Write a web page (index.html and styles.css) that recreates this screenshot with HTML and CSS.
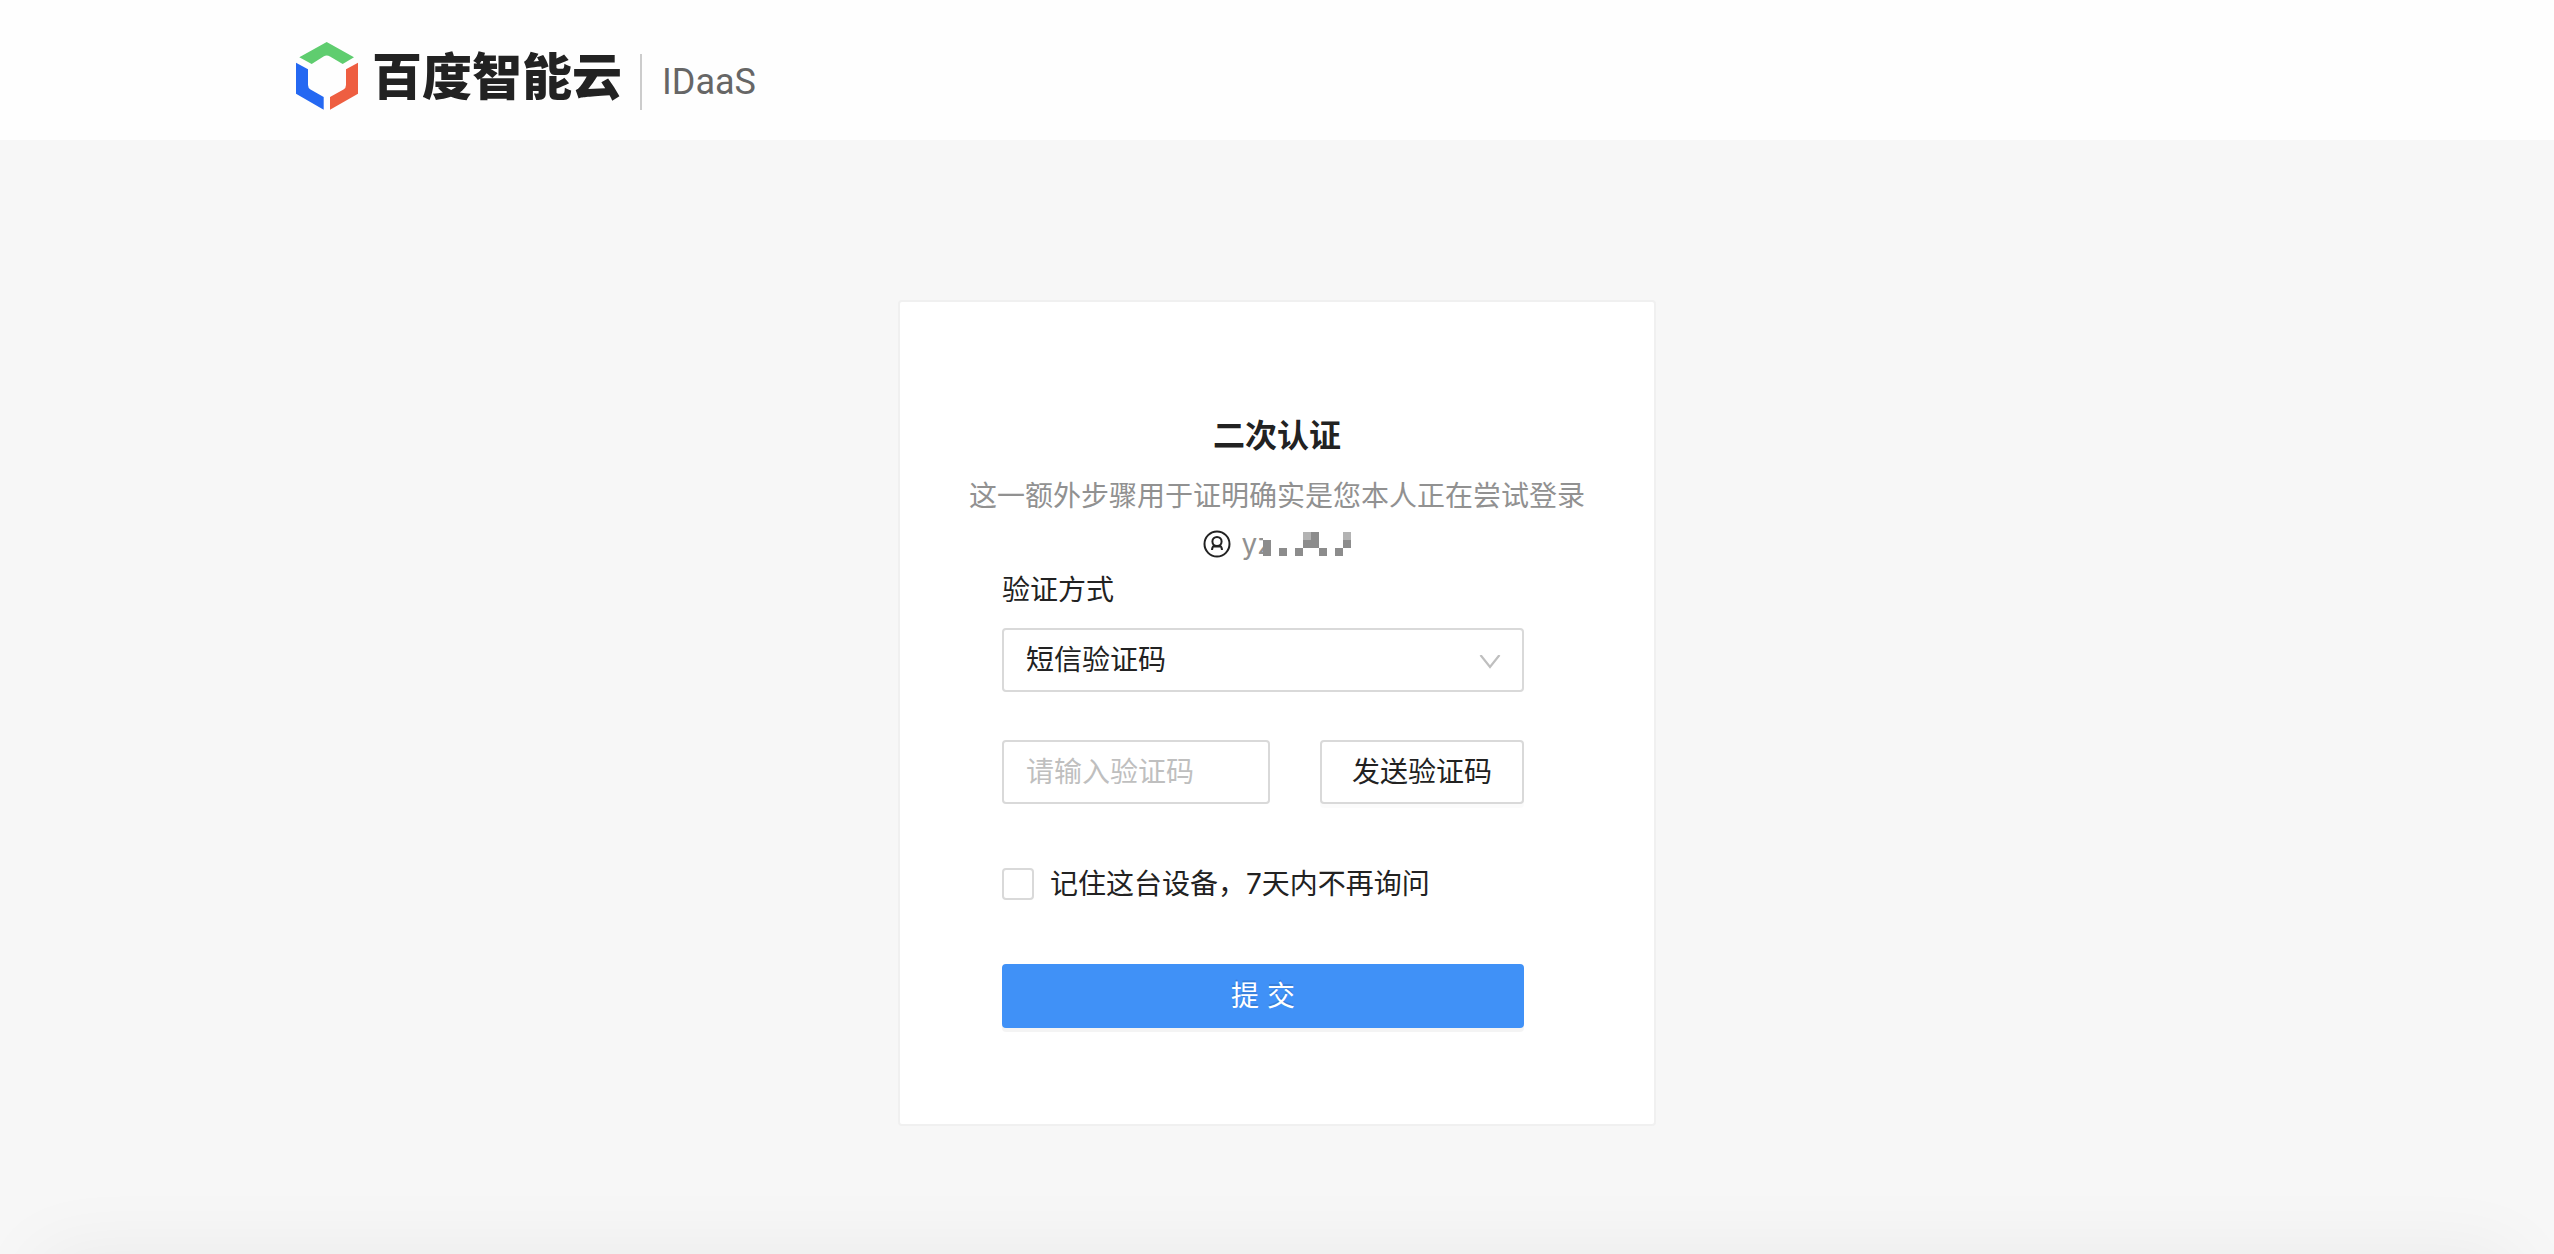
FILE: index.html
```html
<!DOCTYPE html>
<html lang="zh-CN">
<head>
    <meta charset="UTF-8">
    <meta name="viewport" content="width=device-width, initial-scale=1.0">
    <title>二次认证</title>
    <link rel="stylesheet" href="styles.css">
</head>
<body>
    <header class="header">
        <svg class="logo-icon" viewBox="0 0 62 68" aria-hidden="true">
            <path fill="#5fcd6f" d="M30.7 0 58 15.3 46.7 22 34 14.4Q30.7 12.6 27.5 14.4L15.7 22 3.3 15.3Z"/>
            <path fill="#2468f2" d="M0 20.7 12 27.3V43Q12 46 14.5 47.5L27.7 55V67.7L0 51.7Z"/>
            <path fill="#ee5e41" d="M62 20.7 50 27.3V43Q50 46 47.5 47.5L34 55V67.7L62 51.7Z"/>
        </svg>
        <span class="logo-text">百度智能云</span>
        <span class="product">IDaaS</span>
    </header>

    <main class="card">
        <h1>二次认证</h1>
        <p class="desc">这一额外步骤用于证明确实是您本人正在尝试登录</p>
        <div class="user">
            <svg class="user-icon" viewBox="0 0 28 28" aria-hidden="true">
                <g fill="none" stroke="#222" stroke-width="2">
                    <circle cx="14" cy="14" r="12.5"/>
                    <circle cx="14" cy="11.5" r="4.6"/>
                    <path d="M9 20Q9.200 16.500 11.600 15.400M19 20Q18.800 16.500 16.400 15.400M11 16.600H17"/>
                </g>
            </svg>
            <span class="user-name">yz</span>
            <svg class="user-mask" viewBox="0 0 88 24" aria-hidden="true">
                <path fill="#8c8c8c" d="M0 8h8v16H0zM16 16h8v8h-8zM32 16h8v8h-8zM40 8h8V0h8v16H40zM56 16h8v8h-8zM72 16h8v8h-8zM80 8h8v8h-8z"/>
                <path fill="#b3b3b3" d="M40 0h8v8h-8zM80 0h8v8h-8z"/>
            </svg>
        </div>

        <form class="form">
            <label class="form-label" for="method">验证方式</label>
            <div class="select-box">
                <select id="method" class="field">
                    <option>短信验证码</option>
                </select>
                <svg class="arrow" viewBox="0 0 22 14" aria-hidden="true">
                    <path fill="none" stroke="#bfbfbf" stroke-width="2.2" d="M1.500 0 11 12 20.500 0"/>
                </svg>
            </div>
            <div class="code-row">
                <input type="text" id="code" class="field" placeholder="请输入验证码" aria-label="验证码">
                <button type="button" class="btn btn-send">发送验证码</button>
            </div>
            <div class="remember">
                <input type="checkbox" id="remember">
                <label for="remember">记住这台设备，7天内不再询问</label>
            </div>
            <button type="submit" class="btn btn-submit">提 交</button>
        </form>
    </main>
</body>
</html>
```

FILE: styles.css
```css
/* general */
* {
    box-sizing: border-box;
}

body {
    margin: 0;
    min-height: 100vh;
    background: #f7f7f7;
    color: #222;
    font-family: Inter, 'Noto Sans CJK SC', sans-serif;
    font-size: 28px;
    line-height: 40px;
}

/* soft shadow rising from the bottom edge */
body::after {
    content: "";
    position: fixed;
    top: 100%;
    left: 40px;
    right: 40px;
    height: 100px;
    box-shadow: 0 0 80px rgba(0, 0, 0, 0.06);
}

/* header */
.header {
    display: flex;
    align-items: center;
    height: 140px;
    padding: 12px 296px 0;
    background: #fefefe;
}

.logo-icon {
    width: 62px;
    height: 68px;
}

.logo-text {
    margin: 0 0 6px 14px;
    font-family: 'Noto Sans CJK SC', sans-serif;
    font-size: 50px;
    font-weight: 900;
    line-height: 68px;
}

.product {
    margin: 12px 0 0 18px;
    padding-left: 20px;
    border-left: 2px solid #ccc;
    color: #666;
    font-family: Roboto, sans-serif;
    font-size: 36px;
    line-height: 56px;
}

/* card */
.card {
    width: 90%;
    max-width: 758px;
    margin: 160px auto 0;
    padding: 114px 0 96px;
    background: #fff;
    border: 2px solid #f0f0f0;
    border-radius: 4px;
}

h1 {
    margin: 0;
    font-size: 32px;
    font-weight: 600;
    line-height: 40px;
    text-align: center;
}

.desc {
    margin: 20px 0 0;
    color: #919191;
    text-align: center;
}

.user {
    display: flex;
    justify-content: center;
    align-items: center;
    margin-top: 8px;
    color: #919191;
}

.user-icon {
    width: 28px;
    height: 28px;
    margin-right: 10px;
}

/* blocks hiding the rest of the account name */
.user-mask {
    position: relative;
    width: 88px;
    height: 24px;
    margin-left: -10px;
    background: #fff;
}

/* form */
.form {
    width: 522px;
    margin: 6px 0 0 102px;
}

.form-label {
    display: block;
}

.field {
    width: 100%;
    height: 64px;
    padding: 0 22px;
    border: 2px solid #d9d9d9;
    border-radius: 4px;
    background: #fff;
    color: #222;
    font: inherit;
    outline: none;
}

.field::placeholder {
    color: #bfbfbf;
}

.select-box {
    position: relative;
    margin-top: 18px;
}

.select-box .field {
    display: block;
    appearance: none;
}

.arrow {
    position: absolute;
    top: 27px;
    right: 23px;
    width: 22px;
    height: 14px;
    pointer-events: none;
}

.code-row {
    display: flex;
    gap: 50px;
    margin-top: 48px;
}

.code-row .field {
    flex: 1;
    min-width: 0;
}

.btn {
    height: 64px;
    padding: 0;
    border: 2px solid #d9d9d9;
    border-radius: 4px;
    background: #fff;
    color: #222;
    font: inherit;
    cursor: pointer;
}

.btn-send {
    width: 204px;
    box-shadow: 0 4px 0 rgba(0, 0, 0, 0.015);
}

.remember {
    display: flex;
    align-items: center;
    gap: 16px;
    margin-top: 60px;
}

.remember input {
    appearance: none;
    width: 32px;
    height: 32px;
    margin: 0;
    border: 2px solid #d9d9d9;
    border-radius: 4px;
    background: #fff;
}

.btn-submit {
    width: 100%;
    margin-top: 60px;
    border-color: #4091f7;
    background: #4091f7;
    color: #fff;
    text-shadow: 0 -2px 0 rgba(0, 0, 0, 0.12);
    box-shadow: 0 4px 0 rgba(0, 0, 0, 0.045);
}
```
